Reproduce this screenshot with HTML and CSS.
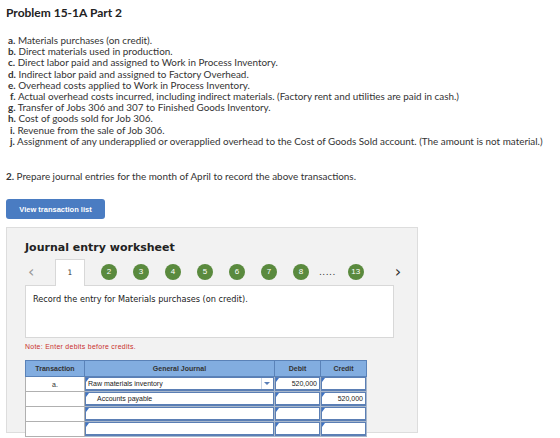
FILE: index.html
```html
<!DOCTYPE html>
<html>
<head>
    <title>Problem 15-1A Part 2</title>
    <meta name="viewport" content="width=device-width, initial-scale=1.0">
<link rel="stylesheet" href="styles.css">
</head>
<body>
    <h1 class="title">Problem 15-1A Part 2</h1>
    <ul class="steps">
        <li><b>a.</b> Materials purchases (on credit).</li>
        <li><b>b.</b> Direct materials used in production.</li>
        <li><b>c.</b> Direct labor paid and assigned to Work in Process Inventory.</li>
        <li><b>d.</b> Indirect labor paid and assigned to Factory Overhead.</li>
        <li><b>e.</b> Overhead costs applied to Work in Process Inventory.</li>
        <li class="narrow"><b>f.</b> Actual overhead costs incurred, including indirect materials. (Factory rent and utilities are paid in cash.)</li>
        <li><b>g.</b> Transfer of Jobs 306 and 307 to Finished Goods Inventory.</li>
        <li><b>h.</b> Cost of goods sold for Job 306.</li>
        <li class="narrow"><b>i.</b> Revenue from the sale of Job 306.</li>
        <li class="narrow"><b>j.</b> Assignment of any underapplied or overapplied overhead to the Cost of Goods Sold account. (The amount is not material.)</li>
    </ul>
    <p class="task"><b>2.</b> Prepare journal entries for the month of April to record the above transactions.</p>
    <button class="view-btn">View transaction list</button>

    <div class="worksheet">
        <h2>Journal entry worksheet</h2>
        <div class="tabs">
            <span class="arrow">&lsaquo;</span>
            <span class="tab">1</span>
            <span class="dot">2</span>
            <span class="dot">3</span>
            <span class="dot">4</span>
            <span class="dot">5</span>
            <span class="dot">6</span>
            <span class="dot">7</span>
            <span class="dot">8</span>
            <span class="more">.....</span>
            <span class="dot">13</span>
            <span class="arrow next">&rsaquo;</span>
        </div>
        <div class="entry-box">Record the entry for Materials purchases (on credit).</div>
        <p class="note">Note: Enter debits before credits.</p>
        <table class="journal">
            <thead>
                <tr>
                    <th class="col-tr">Transaction</th>
                    <th class="col-gj">General Journal</th>
                    <th class="col-num">Debit</th>
                    <th class="col-num">Credit</th>
                </tr>
            </thead>
            <tbody>
                <tr>
                    <td class="tr">a.</td>
                    <td><div class="field select">Raw materials inventory<span class="caret"></span></div></td>
                    <td><div class="field num">520,000</div></td>
                    <td><div class="field num"></div></td>
                </tr>
                <tr>
                    <td class="tr"></td>
                    <td><div class="field credit">Accounts payable</div></td>
                    <td><div class="field num"></div></td>
                    <td><div class="field num">520,000</div></td>
                </tr>
                <tr>
                    <td class="tr"></td>
                    <td><div class="field"></div></td>
                    <td><div class="field num"></div></td>
                    <td><div class="field num"></div></td>
                </tr>
                <tr>
                    <td class="tr"></td>
                    <td><div class="field"></div></td>
                    <td><div class="field num"></div></td>
                    <td><div class="field num"></div></td>
                </tr>
            </tbody>
        </table>
    </div>
</body>
</html>
```

FILE: styles.css
```css
body, html {
    margin: 0;
    padding: 0;
    background-color: #ffffff;
    color: #333333;
    font-family: Lato, "Liberation Sans", sans-serif;
}

body {
    padding: 5px 6px;
    overflow: hidden;
}

.title {
    margin: 0;
    font-size: 12px;
    font-weight: bold;
    color: #222222;
    line-height: 15px;
}

.steps {
    list-style-type: none;
    margin: 15px 0 0 0;
    padding: 0 0 0 2px;
    font-size: 9.9px;
    line-height: 11.2px;
}

.steps li.narrow {
    padding-left: 2px;
}

.task {
    margin: 24px 0 0 0;
    font-size: 9.9px;
    line-height: 11px;
}

.view-btn {
    display: block;
    margin-top: 17px;
    width: 99px;
    height: 20px;
    padding: 0;
    background: #4a7cc2;
    border: none;
    border-radius: 3px;
    color: white;
    font-family: "Liberation Sans", sans-serif;
    font-weight: bold;
    font-size: 7.5px;
}

.worksheet {
    margin-top: 8px;
    width: 412px;
    height: 206px;
    background-color: #f2f2f2;
    border: 1px solid #dddddd;
    padding: 0 0 0 18px;
    box-sizing: border-box;
    font-family: "DejaVu Sans", Verdana, sans-serif;
}

.worksheet h2 {
    margin: 13px 0 0 0;
    font-size: 11px;
    line-height: 14px;
    color: #222222;
}

.tabs {
    display: flex;
    align-items: center;
    margin-top: 3px;
    height: 27px;
}

.tabs > span {
    flex-shrink: 0;
}

.arrow {
    font-size: 16px;
    color: #999999;
    width: 30px;
    box-sizing: border-box;
    padding-left: 3px;
    line-height: 16px;
}

.arrow.next {
    color: #333333;
    margin-left: 12px;
}

.tab {
    width: 30px;
    height: 27px;
    box-sizing: border-box;
    background: #ffffff;
    border: 1px solid #d8d8d8;
    border-bottom: none;
    text-align: center;
    font-size: 7.5px;
    line-height: 26px;
    margin-right: 16px;
    margin-bottom: -1px;
    position: relative;
    z-index: 1;
}

.dot {
    width: 16px;
    height: 16px;
    border-radius: 50%;
    background: #5a8a3e;
    color: #ffffff;
    font-family: "Liberation Sans", sans-serif;
    font-size: 8px;
    line-height: 16px;
    text-align: center;
    margin-right: 16px;
}

.more {
    font-size: 9px;
    letter-spacing: 0.5px;
    margin: 0 12px 0 -6px;
    color: #333333;
}

.entry-box {
    width: 369px;
    height: 53px;
    box-sizing: border-box;
    background: #ffffff;
    border: 1px solid #d8d8d8;
    margin-left: 0;
    padding: 8px 7px;
    font-size: 8.2px;
    color: #222222;
}

.note {
    margin: 4px 0 0 0;
    font-family: "Liberation Sans", sans-serif;
    font-size: 6.9px;
    letter-spacing: 0.3px;
    color: #c9302c;
    line-height: 10px;
}

.journal {
    margin-top: 8px;
    border-collapse: collapse;
    font-family: "Liberation Sans", sans-serif;
    font-size: 7px;
    background: #ffffff;
}

.journal th {
    background: #82ade0;
    border: 1px solid #5a82b8;
    height: 15px;
    padding: 0;
    color: #333333;
    font-size: 7px;
}

.col-tr { width: 58px; }
.col-gj { width: 189px; }
.col-num { width: 45px; }

.journal td {
    border: 1px solid #a9b8cc;
    height: 13px;
    padding: 0;
}

.journal td.tr {
    text-align: center;
    color: #333333;
    border-color: #b0b0b0;
}

.field {
    position: relative;
    height: 11px;
    border: 1px solid #5b7fb5;
    border-bottom-width: 2px;
    background: #ffffff;
    line-height: 11px;
    padding: 0 2px;
    color: #222222;
}

.field::before {
    content: "";
    position: absolute;
    left: 0;
    top: 0;
    border-top: 4px solid #3e73c4;
    border-right: 3px solid transparent;
}

.field.num {
    text-align: right;
}

.field.credit {
    padding-left: 11px;
}

.caret {
    position: absolute;
    right: 3px;
    top: 4px;
    border-top: 3px solid #5a7fb8;
    border-left: 3px solid transparent;
    border-right: 3px solid transparent;
}

.field.select::after {
    content: "";
    position: absolute;
    right: 11px;
    top: 0;
    bottom: 0;
    border-left: 1px solid #c8d4e6;
}
```
